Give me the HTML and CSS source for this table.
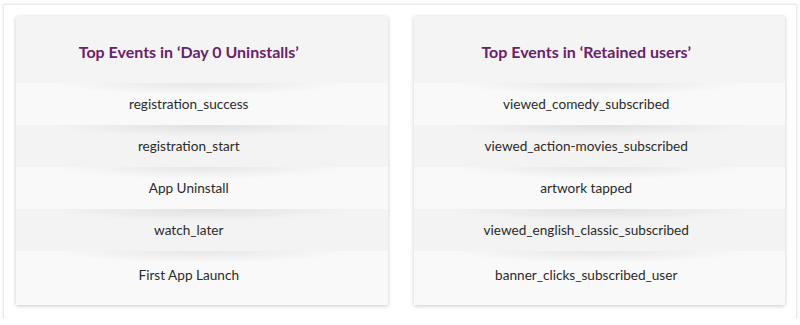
FILE: index.html
```html
<!DOCTYPE html>
<html>
<head>
<meta charset="utf-8">
<link rel="stylesheet" href="styles.css">
</head>
<body>
<div class="frame">
  <div class="card">
    <div class="card-head">Top Events in ‘Day 0 Uninstalls’</div>
    <div class="row odd">registration_success</div>
    <div class="row even">registration_start</div>
    <div class="row odd">App Uninstall</div>
    <div class="row even">watch_later</div>
    <div class="row odd last">First App Launch</div>
  </div>
  <div class="card">
    <div class="card-head">Top Events in ‘Retained users’</div>
    <div class="row odd">viewed_comedy_subscribed</div>
    <div class="row even">viewed_action-movies_subscribed</div>
    <div class="row odd">artwork tapped</div>
    <div class="row even">viewed_english_classic_subscribed</div>
    <div class="row odd last">banner_clicks_subscribed_user</div>
  </div>
</div>
</body>
</html>
```
FILE: styles.css
```css
html, body {
  margin: 0;
  padding: 0;
  background: #ffffff;
}
body {
  font-family: Lato, "Open Sans", sans-serif;
}
.frame {
  margin: 5px 4px 0 4px;
  width: 792px;
  height: 314px;
  box-sizing: border-box;
  padding: 11px 11px 14px 12px;
  display: flex;
  gap: 26px;
  background: #ffffff;
  box-shadow: 0 0 2px 1px rgba(0, 0, 0, 0.12);
}
.card {
  flex: 1;
  display: flex;
  flex-direction: column;
  background: #f9f9f9;
  box-shadow: 0 1px 4px rgba(0, 0, 0, 0.22);
}
.card-head {
  height: 67px;
  box-sizing: border-box;
  padding: 3px 26px 0 0;
  display: flex;
  align-items: center;
  justify-content: center;
  background: #f4f4f4;
  color: #6a216d;
  font-weight: 700;
  font-size: 16px;
}
.row {
  position: relative;
  height: 42px;
  box-sizing: border-box;
  padding-right: 26px;
  display: flex;
  align-items: center;
  justify-content: center;
  font-size: 13.6px;
  color: #2b2b2b;
}
.row::before {
  content: "";
  position: absolute;
  top: 0;
  left: 10%;
  right: 10%;
  height: 12px;
  background: radial-gradient(ellipse 50% 100% at 50% 0, rgba(0, 0, 0, 0.075), rgba(0, 0, 0, 0) 100%);
}
.odd {
  background: #f9f9f9;
}
.even {
  background: #f3f3f3;
}
.last {
  flex: 1;
  padding-bottom: 7px;
}
```
